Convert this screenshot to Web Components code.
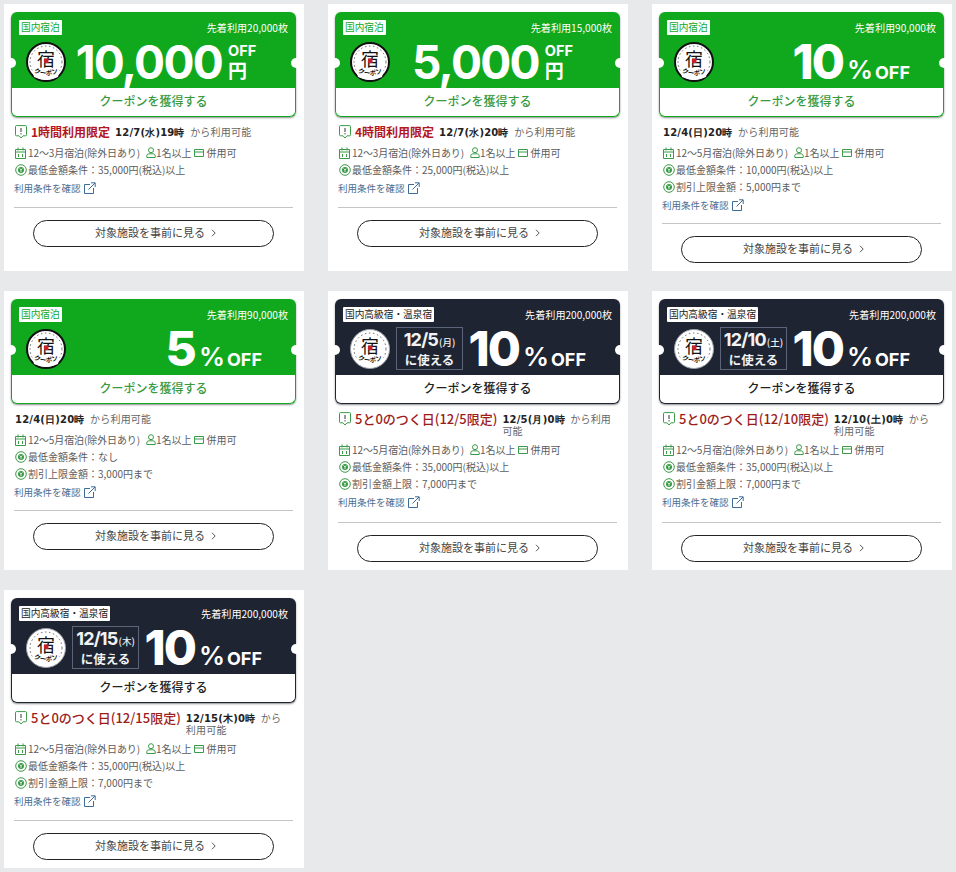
<!DOCTYPE html>
<html lang="ja">
<head>
<meta charset="utf-8">
<title>クーポン</title>
<style>
    html, body { margin: 0; background: #e8e9eb; }
    body { font-family: "Noto Sans CJK JP", "Noto Sans", sans-serif; }
</style>
</head>
<body>

<coupon-grid>
    <coupon-card>
        <coupon-ticket tag="国内宿泊" count="先着利用20,000枚" amount="10,000" unit="円"></coupon-ticket>
        <limit-line label="1時間利用限定" time="12/7(水)19時"></limit-line>
        <stay-line period="12〜3月宿泊(除外日あり)"></stay-line>
        <cond-line>最低金額条件：35,000円(税込)以上</cond-line>
        <terms-link></terms-link>
        <facility-button extra="1"></facility-button>
    </coupon-card>
    <coupon-card>
        <coupon-ticket tag="国内宿泊" count="先着利用15,000枚" amount="5,000" unit="円" shift="5"></coupon-ticket>
        <limit-line label="4時間利用限定" time="12/7(水)20時"></limit-line>
        <stay-line period="12〜3月宿泊(除外日あり)"></stay-line>
        <cond-line>最低金額条件：25,000円(税込)以上</cond-line>
        <terms-link></terms-link>
        <facility-button extra="1"></facility-button>
    </coupon-card>
    <coupon-card>
        <coupon-ticket tag="国内宿泊" count="先着利用90,000枚" percent="10"></coupon-ticket>
        <limit-line time="12/4(日)20時"></limit-line>
        <stay-line period="12〜5月宿泊(除外日あり)"></stay-line>
        <cond-line>最低金額条件：10,000円(税込)以上</cond-line>
        <cond-line>割引上限金額：5,000円まで</cond-line>
        <terms-link></terms-link>
        <facility-button></facility-button>
    </coupon-card>

    <coupon-card>
        <coupon-ticket tag="国内宿泊" count="先着利用90,000枚" percent="5"></coupon-ticket>
        <limit-line time="12/4(日)20時"></limit-line>
        <stay-line period="12〜5月宿泊(除外日あり)"></stay-line>
        <cond-line>最低金額条件：なし</cond-line>
        <cond-line>割引上限金額：3,000円まで</cond-line>
        <terms-link></terms-link>
        <facility-button></facility-button>
    </coupon-card>
    <coupon-card>
        <coupon-ticket tone="dark" tag="国内高級宿・温泉宿" count="先着利用200,000枚" percent="10" day="12/5" week="(月)"></coupon-ticket>
        <limit-line tone="dark" label="5と0のつく日(12/5限定)" time="12/5(月)0時"></limit-line>
        <stay-line period="12〜5月宿泊(除外日あり)"></stay-line>
        <cond-line>最低金額条件：35,000円(税込)以上</cond-line>
        <cond-line>割引金額上限：7,000円まで</cond-line>
        <terms-link></terms-link>
        <facility-button extra="2"></facility-button>
    </coupon-card>
    <coupon-card>
        <coupon-ticket tone="dark" tag="国内高級宿・温泉宿" count="先着利用200,000枚" percent="10" day="12/10" week="(土)"></coupon-ticket>
        <limit-line tone="dark" label="5と0のつく日(12/10限定)" time="12/10(土)0時"></limit-line>
        <stay-line period="12〜5月宿泊(除外日あり)"></stay-line>
        <cond-line>最低金額条件：35,000円(税込)以上</cond-line>
        <cond-line>割引金額上限：7,000円まで</cond-line>
        <terms-link></terms-link>
        <facility-button extra="2"></facility-button>
    </coupon-card>

    <coupon-card>
        <coupon-ticket tone="dark" tag="国内高級宿・温泉宿" count="先着利用200,000枚" percent="10" day="12/15" week="(木)"></coupon-ticket>
        <limit-line tone="dark" label="5と0のつく日(12/15限定)" time="12/15(木)0時"></limit-line>
        <stay-line period="12〜5月宿泊(除外日あり)"></stay-line>
        <cond-line>最低金額条件：35,000円(税込)以上</cond-line>
        <cond-line>割引金額上限：7,000円まで</cond-line>
        <terms-link></terms-link>
        <facility-button extra="1"></facility-button>
    </coupon-card>
</coupon-grid>

<script>
const GREEN = '#10a91e';
const NAVY = '#1f2433';
const ICON_GREEN = '#3b9a48';

class CouponGrid extends HTMLElement {
    constructor() {
        super();
        this.attachShadow({ mode: 'open' });
        this.shadowRoot.innerHTML = `
            <style>
                :host { display: grid; grid-template-columns: repeat(3, 300px); gap: 20px 24px; padding: 4px; align-items: stretch; }
            </style>
            <slot></slot>
        `;
    }
}

class CouponCard extends HTMLElement {
    constructor() {
        super();
        this.attachShadow({ mode: 'open' });
        this.shadowRoot.innerHTML = `
            <style>
                :host { display: flex; flex-direction: column; background: #fff; padding: 8px 8px 8px 7px; box-sizing: border-box; }
            </style>
            <slot></slot>
        `;
    }
}

class CouponLogo extends HTMLElement {
    connectedCallback() {
        const dark = this.getAttribute('tone') === 'dark';
        if (!this.shadowRoot) this.attachShadow({ mode: 'open' });
        this.shadowRoot.innerHTML = `
            <style>
                :host { display: block; width: 40px; height: 40px; flex: none; }
                svg { display: block; }
                text { font-family: "Noto Sans CJK JP", sans-serif; fill: #111; }
            </style>
            <svg width="40" height="40" viewBox="0 0 40 40">
                <defs><path id="arc" d="M4 28 Q20 39 36 28"></path></defs>
                <circle cx="20" cy="20" r="${dark ? 19.5 : 19}" fill="#fff" stroke="${dark ? '#9aa0a8' : '#111'}" stroke-width="${dark ? 1 : 2}"></circle>
                <circle cx="20" cy="20" r="16" fill="none" stroke="#666" stroke-width="1" stroke-dasharray="1.5 2.6"></circle>
                <text x="20" y="24" text-anchor="middle" font-size="18" font-weight="400">宿</text>
                <rect x="18" y="16.500" width="4.500" height="4.500" fill="#c8202a"></rect>
                <path d="M6 26 Q20 29 34 26 L32 35 Q20 41 8 35 Z" fill="#fff"></path>
                <text font-size="6.500" font-weight="700"><textPath href="#arc" startOffset="50%" text-anchor="middle">クーポン</textPath></text>
            </svg>
        `;
    }
}

class CouponTicket extends HTMLElement {
    connectedCallback() {
        const tone = this.getAttribute('tone') || 'green';
        const dark = tone === 'dark';
        const base = dark ? NAVY : GREEN;
        const a = (n) => this.getAttribute(n);
        let offer;
        if (a('amount')) {
            offer = `
                <div class="amount" style="margin-left: ${a('shift') || 0}px">
                    <span class="value">${a('amount')}</span>
                    <span class="stack"><span class="off">OFF</span><span class="unit">${a('unit')}</span></span>
                </div>`;
        } else {
            const dayBox = a('day') ? `
                <div class="daybox">
                    <div class="d1">${a('day')}<small>${a('week')}</small></div>
                    <div class="d2">に使える</div>
                </div>` : '';
            offer = `${dayBox}
                <div class="percent">
                    <span class="num">${a('percent')}</span>
                    <span class="pct">%</span>
                    <span class="off2">OFF</span>
                </div>`;
        }
        if (!this.shadowRoot) this.attachShadow({ mode: 'open' });
        this.shadowRoot.innerHTML = `
            <style>
                :host { display: block; position: relative; height: 105px; border-radius: 6px; box-shadow: 0 1px 2px rgba(0,0,0,.45); background: #fff; flex: none; }
                .banner { height: 76px; background: ${base}; border-radius: 6px 6px 0 0; display: flex; flex-direction: column; color: #fff; box-sizing: border-box; }
                .top { display: flex; justify-content: space-between; align-items: center; height: 23px; padding: 7px 8px 0 8px; box-sizing: border-box; }
                .tag { background: #fff; color: ${dark ? '#222' : GREEN}; font-size: 9.700px; line-height: 15px; padding: 0 2px; white-space: nowrap; border-radius: 1px; }
                .count { font-size: 10.100px; white-space: nowrap; }
                .main { flex: 1; display: flex; align-items: center; padding-left: 15px; min-height: 0; }
                .amount { flex: 1; display: flex; justify-content: center; align-items: center; gap: 6px; padding-right: 30px; font-family: Inter, sans-serif; }
                .value { font-size: 46px; font-weight: 700; letter-spacing: -1.700px; line-height: 1; }
                .stack { display: flex; flex-direction: column; font-weight: 700; line-height: 1; }
                .off { font-size: 14.500px; }
                .unit { font-size: 19px; font-family: "Noto Sans CJK JP", sans-serif; margin-top: 1px; }
                .daybox { border: 1px solid #5c6479; width: 65px; height: 41px; margin-left: 6px; display: flex; flex-direction: column; align-items: center; justify-content: center; font-weight: 700; color: #f1f2f4; }
                .d1 { font-family: Inter, sans-serif; font-size: 18px; line-height: 20px; letter-spacing: -.800px; white-space: nowrap; }
                .d1 small { font-family: "Noto Sans CJK JP", sans-serif; font-size: 9.500px; font-weight: 500; margin-left: 1px; letter-spacing: 0; }
                .d2 { font-size: 12.500px; line-height: 16px; white-space: nowrap; }
                .percent { margin-left: auto; padding-right: 34px; display: flex; align-items: baseline; font-family: Inter, sans-serif; font-weight: 700; line-height: 1; }
                .num { font-size: 48px; font-weight: 800; letter-spacing: -2px; }
                .pct { font-size: 26px; margin-left: 4px; font-weight: 600; }
                .off2 { font-size: 18px; margin-left: 2px; }
                .get { height: 29px; padding-bottom: 4px; box-sizing: border-box; border: 1px solid ${base}; border-top: 0; border-radius: 0 0 6px 6px; display: flex; align-items: center; justify-content: center; font-size: 12px; font-weight: 500; color: ${dark ? '#222' : '#3a9a40'}; }
                .notch { position: absolute; top: 46px; width: 10px; height: 10px; border-radius: 50%; background: #fff; }
                .notch.l { left: -5px; }
                .notch.r { right: -5px; }
            </style>
            <div class="banner">
                <div class="top">
                    <span class="tag">${a('tag')}</span>
                    <span class="count">${a('count')}</span>
                </div>
                <div class="main">
                    <coupon-logo tone="${tone}"></coupon-logo>
                    ${offer}
                </div>
            </div>
            <div class="get">クーポンを獲得する</div>
            <i class="notch l"></i><i class="notch r"></i>
        `;
    }
}

class LimitLine extends HTMLElement {
    connectedCallback() {
        const label = this.getAttribute('label');
        const dark = this.getAttribute('tone') === 'dark';
        if (!this.shadowRoot) this.attachShadow({ mode: 'open' });
        this.shadowRoot.innerHTML = `
            <style>
                :host { display: flex; align-items: flex-start; margin: 7px 0 ${dark ? -2 : 0}px; padding: 2px 0 2px 4px; box-sizing: border-box; flex: none; }
                svg { flex: none; margin: -1px 4px -2px 0; }
                .label { color: ${dark ? '#9c1c1c' : '#b3161c'}; font-weight: ${dark ? 500 : 700}; font-size: ${dark ? 13 : 12}px; line-height: 12px; white-space: nowrap; margin-right: 5px; }
                .rest { font-size: 10px; line-height: 12px; color: #666; letter-spacing: .2px; padding-right: 6px; }
                b { font-family: "DejaVu Sans", sans-serif; font-size: 10px; line-height: 0; color: #222; margin-right: 3px; }
            </style>
            ${label ? `
                <svg width="12" height="14" viewBox="0 0 12 14" fill="none">
                    <path d="M1.500 .6h9a1 1 0 0 1 1 1v8.200a1 1 0 0 1-1 1H8L6 13 4 10.800H1.500a1 1 0 0 1-1-1V1.600a1 1 0 0 1 1-1z" stroke="${ICON_GREEN}" stroke-width="1"></path>
                    <path d="M6 3v4M6 8.200v1.200" stroke="#333" stroke-width="1"></path>
                </svg>
                <span class="label">${label}</span>` : ''}
            <span class="rest"><b>${this.getAttribute('time')}</b> から利用可能</span>
        `;
    }
}

class StayLine extends HTMLElement {
    connectedCallback() {
        if (!this.shadowRoot) this.attachShadow({ mode: 'open' });
        this.shadowRoot.innerHTML = `
            <style>
                :host { display: flex; align-items: center; height: 17px; margin-top: 4px; padding-left: 4px; font-size: 10px; color: #5c5c5c; white-space: nowrap; flex: none; }
                svg { flex: none; margin-right: 2px; }
                .period { letter-spacing: -.1px; }
                .gap { margin-left: 6px; margin-right: 0; }
                .gap2 { margin-left: 2px; margin-right: 3px; }
            </style>
            <svg width="11" height="12" viewBox="0 0 11 12" fill="none" stroke="${ICON_GREEN}" stroke-width="1">
                <path d="M.5 2.500h10v9H.5zM.5 5h10M3 .5v3M8 .5v3M3.500 7v3M7.500 7v3"></path>
            </svg>
            <span class="period">${this.getAttribute('period')}</span>
            <svg class="gap" width="10" height="11" viewBox="0 0 10 11" fill="none" stroke="${ICON_GREEN}" stroke-width="1">
                <circle cx="5" cy="3.200" r="2.500"></circle>
                <path d="M.8 10.500V8.800q0-1.800 2-2h4.400q2 .2 2 2v1.700z"></path>
            </svg>
            <span>1名以上</span>
            <svg class="gap2" width="10" height="9" viewBox="0 0 10 9" fill="none" stroke="${ICON_GREEN}" stroke-width="1">
                <path d="M.5 1.500h9v7h-9zM.5 4h9"></path>
            </svg>
            <span>併用可</span>
        `;
    }
}

class CondLine extends HTMLElement {
    constructor() {
        super();
        this.attachShadow({ mode: 'open' });
        this.shadowRoot.innerHTML = `
            <style>
                :host { display: flex; align-items: center; height: 17px; padding-left: 4px; font-size: 10px; color: #5c5c5c; white-space: nowrap; flex: none; }
                svg { flex: none; margin-right: 1px; }
            </style>
            <svg width="12" height="12" viewBox="0 0 12 12">
                <circle cx="6" cy="6" r="5.300" fill="none" stroke="${ICON_GREEN}" stroke-width="1"></circle>
                <circle cx="6" cy="6" r="3" fill="${ICON_GREEN}"></circle>
                <path d="M4.700 4.500 6 6l1.300-1.500M6 6v2" stroke="#fff" stroke-width=".8" fill="none"></path>
            </svg>
            <slot></slot>
        `;
    }
}

class TermsLink extends HTMLElement {
    constructor() {
        super();
        this.attachShadow({ mode: 'open' });
        this.shadowRoot.innerHTML = `
            <style>
                :host { display: flex; align-items: center; height: 14px; margin-top: 3px; padding-left: 3px; gap: 3px; font-size: 9.500px; color: #4a6d92; white-space: nowrap; flex: none; }
                svg { flex: none; }
            </style>
            <span>利用条件を確認</span>
            <svg width="12" height="12" viewBox="0 0 12 12" fill="none" stroke="#3f6c96" stroke-width="1">
                <path d="M6 2.500H.5v9h9V6M4.500 7.500 11 1M7 .8h4.200V5"></path>
            </svg>
        `;
    }
}

class FacilityButton extends HTMLElement {
    connectedCallback() {
        const top = 11 + Number(this.getAttribute('extra') || 0);
        if (!this.shadowRoot) this.attachShadow({ mode: 'open' });
        this.shadowRoot.innerHTML = `
            <style>
                :host { display: block; flex: none; }
                hr { border: 0; border-top: 1px solid #c4c4c4; margin: ${top}px 3px 12px 3px; }
                a { display: flex; align-items: center; justify-content: center; gap: 6px; box-sizing: border-box; height: 27px; width: 241px; margin-left: 22px; padding: 0 0 3px 4px; border: 1px solid #222; border-radius: 14px; font-size: 11px; color: #444; }
                svg { flex: none; margin-top: 2px; }
            </style>
            <hr>
            <a>
                <span>対象施設を事前に見る</span>
                <svg width="5" height="8" viewBox="0 0 5 8" fill="none" stroke="#555" stroke-width="1"><path d="M1 .8 4.200 4 1 7.200"></path></svg>
            </a>
        `;
    }
}

customElements.define('coupon-grid', CouponGrid);
customElements.define('coupon-card', CouponCard);
customElements.define('coupon-logo', CouponLogo);
customElements.define('coupon-ticket', CouponTicket);
customElements.define('limit-line', LimitLine);
customElements.define('stay-line', StayLine);
customElements.define('cond-line', CondLine);
customElements.define('terms-link', TermsLink);
customElements.define('facility-button', FacilityButton);
</script>
</body>
</html>
